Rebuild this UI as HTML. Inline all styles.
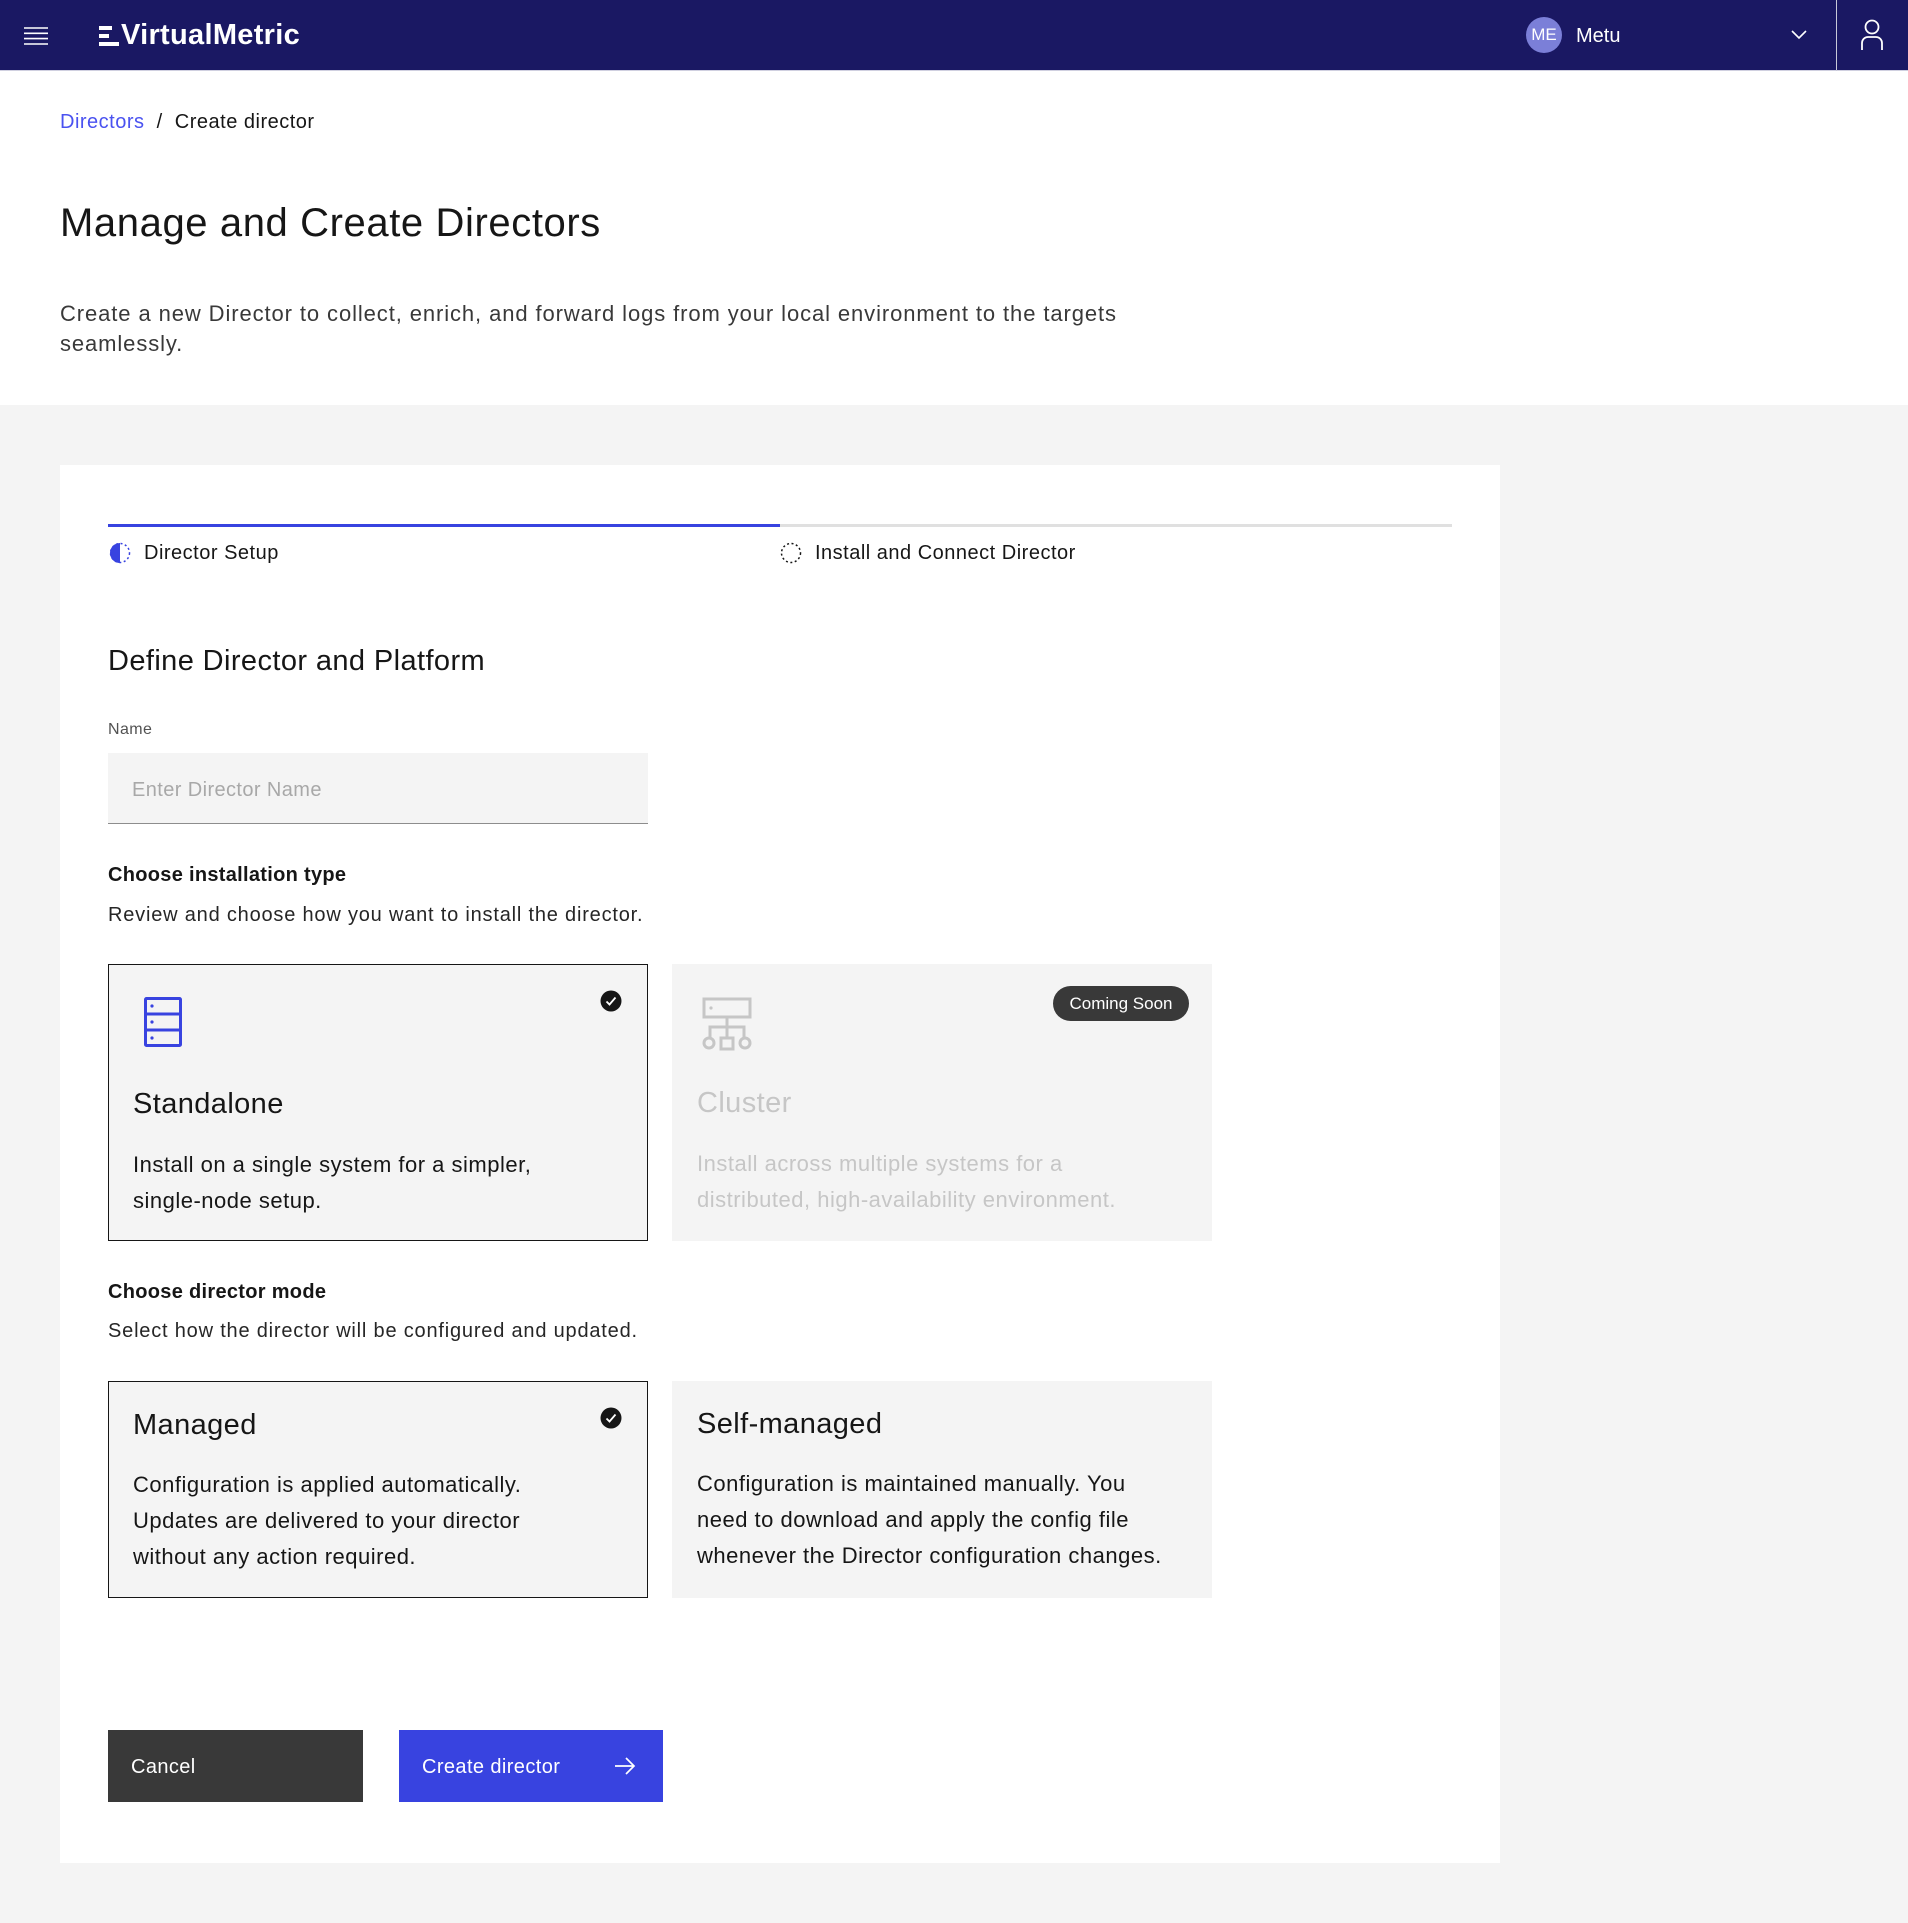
<!DOCTYPE html>
<html><head><meta charset="utf-8">
<style>
*{margin:0;padding:0;box-sizing:border-box}
body{width:1908px;height:1923px;position:relative;background:#f4f4f4;font-family:"Liberation Sans",sans-serif;color:#161616;overflow:hidden}
.a{position:absolute;white-space:nowrap}
.hdr{position:absolute;left:0;top:0;width:1908px;height:71px;background:#1a1863;border-bottom:1px solid #d0d0e0}
.top{position:absolute;left:0;top:71px;width:1908px;height:334px;background:#fff}
.card{position:absolute;left:60px;top:465px;width:1440px;height:1398px;background:#fff}
.tile{position:absolute;background:#f4f4f4}
.sel{border:1px solid #161616}
.desc{font-size:22px;line-height:36px;white-space:normal;letter-spacing:0.5px}
</style></head><body>
<div class="hdr">
  <svg class="a" style="left:24px;top:27px" width="24" height="18" viewBox="0 0 24 18"><g stroke="#fff" stroke-width="1.6"><line x1="0" y1="1" x2="24" y2="1"/><line x1="0" y1="6.3" x2="24" y2="6.3"/><line x1="0" y1="11.6" x2="24" y2="11.6"/><line x1="0" y1="17" x2="24" y2="17"/></g></svg>
  <svg class="a" style="left:99px;top:26px" width="20" height="20" viewBox="0 0 20 20"><g fill="#fff"><rect x="0" y="0" width="13" height="4"/><rect x="0" y="8" width="10" height="4"/><rect x="0" y="16" width="20" height="4"/></g></svg>
  <div class="a" style="left:121px;top:17px;font-size:29px;line-height:36px;font-weight:bold;color:#fff;letter-spacing:0.3px">VirtualMetric</div>
  <div class="a" style="left:1526px;top:17px;width:36px;height:36px;border-radius:50%;background:#7b7fd8;color:#fff;font-size:17px;line-height:36px;text-align:center">ME</div>
  <div class="a" style="left:1576px;top:23px;font-size:20px;line-height:26px;color:#fff">Metu</div>
  <svg class="a" style="left:1791px;top:30px" width="16" height="10" viewBox="0 0 16 10"><polyline points="1,1 8,8 15,1" fill="none" stroke="#fff" stroke-width="1.6"/></svg>
  <div class="a" style="left:1836px;top:0;width:1px;height:71px;background:#c8c8d8"></div>
  <svg class="a" style="left:1860px;top:19px" width="24" height="32" viewBox="0 0 24 32"><g fill="none" stroke="#fff" stroke-width="1.8"><circle cx="12" cy="8" r="6.5"/><path d="M2 31 V24 a6 6 0 0 1 6 -6 h8 a6 6 0 0 1 6 6 V31"/></g></svg>
</div>
<div class="top">
  <div class="a" style="left:60px;top:38px;font-size:20px;line-height:26px;letter-spacing:0.5px"><span style="color:#4a52f0">Directors</span><span style="color:#161616">&nbsp;&nbsp;/&nbsp;&nbsp;Create director</span></div>
  <div class="a" style="left:60px;top:128px;font-size:40px;line-height:48px;color:#161616;letter-spacing:0.6px">Manage and Create Directors</div>
  <div class="a" style="left:60px;top:228px;font-size:22px;line-height:30px;color:#393939;letter-spacing:0.9px">Create a new Director to collect, enrich, and forward logs from your local environment to the targets<br>seamlessly.</div>
</div>
<div class="card">
  <div class="a" style="left:48px;top:59px;width:672px;height:3px;background:#3843e0"></div>
  <div class="a" style="left:720px;top:59px;width:672px;height:3px;background:#e0e0e0"></div>
  <svg class="a" style="left:49px;top:77px" width="22" height="22" viewBox="0 0 22 22"><path d="M11 1 A10 10 0 0 0 11 21 Z" fill="#3843e0"/><circle cx="11" cy="11" r="9.5" fill="none" stroke="#3843e0" stroke-width="1.5" stroke-dasharray="2 2.5"/></svg>
  <div class="a" style="left:84px;top:75px;font-size:20px;line-height:26px;letter-spacing:0.5px">Director Setup</div>
  <svg class="a" style="left:720px;top:77px" width="22" height="22" viewBox="0 0 22 22"><circle cx="11" cy="11" r="9.5" fill="none" stroke="#161616" stroke-width="1.5" stroke-dasharray="2 2.5"/></svg>
  <div class="a" style="left:755px;top:75px;font-size:20px;line-height:26px;letter-spacing:0.5px">Install and Connect Director</div>
  <div class="a" style="left:48px;top:178px;font-size:29px;line-height:36px;letter-spacing:0.4px">Define Director and Platform</div>
  <div class="a" style="left:48px;top:254px;font-size:16px;line-height:22px;color:#525252;letter-spacing:0.4px">Name</div>
  <div class="a" style="left:48px;top:288px;width:540px;height:71px;background:#f4f4f4;border-bottom:1px solid #8d8d8d"></div>
  <div class="a" style="left:72px;top:312px;font-size:20px;line-height:26px;color:#a8a8a8;letter-spacing:0.4px">Enter Director Name</div>
  <div class="a" style="left:48px;top:397px;font-size:20px;line-height:26px;font-weight:bold;letter-spacing:0.3px">Choose installation type</div>
  <div class="a" style="left:48px;top:437px;font-size:20px;line-height:26px;color:#262626;letter-spacing:0.8px">Review and choose how you want to install the director.</div>

  <div class="tile sel" style="left:48px;top:499px;width:540px;height:277px">
    <svg class="a" style="left:35px;top:32px" width="38" height="50" viewBox="0 0 38 50"><g fill="none" stroke="#3843e0" stroke-width="3"><rect x="1.5" y="1.5" width="35" height="47" rx="1"/><line x1="1.5" y1="17" x2="36.5" y2="17"/><line x1="1.5" y1="33" x2="36.5" y2="33"/></g><g fill="#3843e0"><circle cx="8" cy="9" r="1.6"/><circle cx="8" cy="25" r="1.6"/><circle cx="8" cy="41" r="1.6"/></g></svg>
    <svg class="a" style="left:491px;top:25px" width="22" height="22" viewBox="0 0 22 22"><circle cx="11" cy="11" r="10.5" fill="#161616"/><polyline points="6.5,11.5 9.5,14.5 15.5,7.5" fill="none" stroke="#fff" stroke-width="1.8"/></svg>
    <div class="a" style="left:24px;top:121px;font-size:29px;line-height:36px;letter-spacing:0.4px">Standalone</div>
    <div class="a desc" style="left:24px;top:182px;width:510px">Install on a single system for a simpler,<br>single-node setup.</div>
  </div>
  <div class="tile" style="left:612px;top:499px;width:540px;height:277px">
    <svg class="a" style="left:29px;top:33px" width="54" height="54" viewBox="0 0 54 54"><g fill="none" stroke="#c6c6c6" stroke-width="3"><rect x="3" y="2" width="46" height="18"/><line x1="26" y1="20" x2="26" y2="40"/><path d="M9 40 V30 H43 V40"/><circle cx="8" cy="46" r="5"/><rect x="20" y="41" width="12" height="11"/><circle cx="44" cy="46" r="5"/></g><circle cx="10" cy="11" r="1.6" fill="#c6c6c6"/></svg>
    <div class="a" style="left:381px;top:22px;width:136px;height:35px;border-radius:18px;background:#393939;color:#fff;font-size:17px;line-height:35px;text-align:center">Coming Soon</div>
    <div class="a" style="left:25px;top:121px;font-size:29px;line-height:36px;color:#c6c6c6;letter-spacing:0.4px">Cluster</div>
    <div class="a desc" style="left:25px;top:182px;width:515px;color:#c6c6c6">Install across multiple systems for a<br>distributed, high-availability environment.</div>
  </div>

  <div class="a" style="left:48px;top:814px;font-size:20px;line-height:26px;font-weight:bold;letter-spacing:0.3px">Choose director mode</div>
  <div class="a" style="left:48px;top:853px;font-size:20px;line-height:26px;color:#262626;letter-spacing:0.8px">Select how the director will be configured and updated.</div>

  <div class="tile sel" style="left:48px;top:916px;width:540px;height:217px">
    <svg class="a" style="left:491px;top:25px" width="22" height="22" viewBox="0 0 22 22"><circle cx="11" cy="11" r="10.5" fill="#161616"/><polyline points="6.5,11.5 9.5,14.5 15.5,7.5" fill="none" stroke="#fff" stroke-width="1.8"/></svg>
    <div class="a" style="left:24px;top:25px;font-size:29px;line-height:36px;letter-spacing:0.4px">Managed</div>
    <div class="a desc" style="left:24px;top:85px;width:510px">Configuration is applied automatically.<br>Updates are delivered to your director<br>without any action required.</div>
  </div>
  <div class="tile" style="left:612px;top:916px;width:540px;height:217px">
    <div class="a" style="left:25px;top:25px;font-size:29px;line-height:36px;letter-spacing:0.4px">Self-managed</div>
    <div class="a desc" style="left:25px;top:85px;width:515px">Configuration is maintained manually. You<br>need to download and apply the config file<br>whenever the Director configuration changes.</div>
  </div>

  <div class="a" style="left:48px;top:1265px;width:255px;height:72px;background:#393939"></div>
  <div class="a" style="left:71px;top:1289px;font-size:20px;line-height:26px;color:#fff;letter-spacing:0.4px">Cancel</div>
  <div class="a" style="left:339px;top:1265px;width:264px;height:72px;background:#3843e0"></div>
  <div class="a" style="left:362px;top:1289px;font-size:20px;line-height:26px;color:#fff;letter-spacing:0.4px">Create director</div>
  <svg class="a" style="left:554px;top:1292px" width="22" height="18" viewBox="0 0 22 18"><g fill="none" stroke="#fff" stroke-width="1.7"><line x1="1" y1="9" x2="20" y2="9"/><polyline points="12,1 20,9 12,17"/></g></svg>
</div>
</body></html>
